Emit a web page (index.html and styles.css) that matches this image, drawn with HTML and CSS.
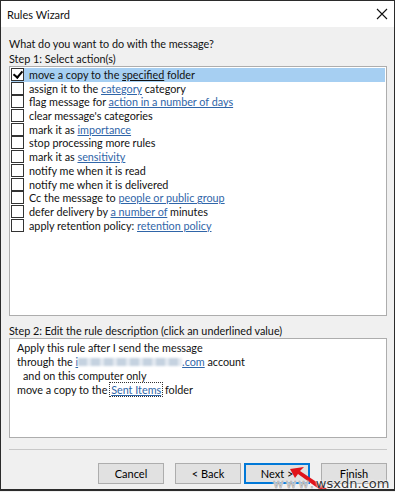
FILE: index.html
```html
<!DOCTYPE html>
<html lang="en">
<head>
  <meta charset="UTF-8" />
  <title>Rules Wizard</title>
  <link rel="stylesheet" href="styles.css">
</head>
<body>
  <div class="window">
    <div class="titlebar">
      <span class="title">Rules Wizard</span>
      <svg class="close" width="12" height="12" viewBox="0 0 12 12">
        <path d="M1 1 L11 11 M11 1 L1 11" stroke="#111" stroke-width="1.1" fill="none" />
      </svg>
    </div>

    <div class="content">
      <p class="question">What do you want to do with the message?</p>
      <p class="step">Step 1: Select action(s)</p>

      <ul class="actions">
        <li class="selected"><span class="check checked"></span>move a copy to the <u>specified</u> folder</li>
        <li><span class="check"></span>assign it to the <a>category</a> category</li>
        <li><span class="check"></span>flag message for <a>action in a number of days</a></li>
        <li><span class="check"></span>clear message's categories</li>
        <li><span class="check"></span>mark it as <a>importance</a></li>
        <li><span class="check"></span>stop processing more rules</li>
        <li><span class="check"></span>mark it as <a>sensitivity</a></li>
        <li><span class="check"></span>notify me when it is read</li>
        <li><span class="check"></span>notify me when it is delivered</li>
        <li><span class="check"></span>Cc the message to <a>people or public group</a></li>
        <li><span class="check"></span>defer delivery by <a>a number of</a> minutes</li>
        <li><span class="check"></span>apply retention policy: <a>retention policy</a></li>
      </ul>

      <p class="step step2">Step 2: Edit the rule description (click an underlined value)</p>

      <div class="description">
        <div>Apply this rule after I send the message</div>
        <div>through the <a>i<span class="blur"></span>.com</a> account</div>
        <div class="indent">and on this computer only</div>
        <div>move a copy to the <a class="focused">Sent Items</a> folder</div>
      </div>

      <hr class="separator">

      <div class="buttons">
        <button>Cancel</button>
        <button>&lt; Back</button>
        <button class="default">Next &gt;</button>
        <button>Finish</button>
      </div>
    </div>

    <!-- watermark over the buttons -->
    <svg class="arrow" width="50" height="30" viewBox="0 0 50 30">
      <polygon points="0,2 14,0 10,4 40,24 46,22 44,30 36,27 8,7 5,11" fill="#e0141b" />
    </svg>
    <div class="watermark"><span class="www">www.</span>wsxdn.com</div>
  </div>
</body>
</html>
```

FILE: styles.css
```css
* {
  box-sizing: border-box;
  margin: 0;
  padding: 0;
}
body {
  background: #f0f0f0;
  font-family: 'Lato', sans-serif;
  font-size: 10.8px;
  color: #111;
}
.window {
  position: relative;
  width: 395px;
  height: 491px;
  border: 1px solid #2b2b2b;
  border-bottom-width: 2px;
  background: #f0f0f0;
  overflow: hidden;
}
.titlebar {
  height: 26px;
  background: #fff;
  display: flex;
  align-items: center;
  justify-content: space-between;
  padding: 0 6px;
}
.title {
  font-size: 11px;
}
.content {
  padding: 9px 7px 0 8px;
}
.question, .step {
  line-height: 15px;
  height: 15px;
}
.actions {
  list-style: none;
  background: #fff;
  border: 1px solid #adadad;
  height: 250px;
  padding: 1px 1px 0 1px;
}
.actions li {
  height: 13.7px;
  line-height: 13.7px;
  white-space: nowrap;
}
.actions li.selected {
  background: #a6cff2;
}
.check {
  display: inline-block;
  vertical-align: -2px;
  width: 13px;
  height: 13px;
  border: 1px solid #333;
  background: #fff;
  margin: 0 5px 0 0;
  position: relative;
}
.checked::after {
  content: "";
  position: absolute;
  left: 3px;
  top: 0;
  width: 4px;
  height: 7px;
  border: solid #000;
  border-width: 0 2px 2px 0;
  transform: rotate(40deg);
}
a {
  color: #2f65a8;
  text-decoration: underline;
}
.step2 {
  margin-top: 7px;
}
.description {
  background: #fff;
  border: 1px solid #adadad;
  height: 100px;
  padding: 2px 7px;
  line-height: 14px;
}
.description .indent {
  padding-left: 6px;
}
.blur {
  display: inline-block;
  width: 104px;
  height: 8px;
  vertical-align: 0;
  background: repeating-linear-gradient(90deg, #c5d2e0 0 9px, #e3e9f0 9px 13px);
  filter: blur(1px);
}
.focused {
  outline: 1px dotted #333;
  padding: 0 1px;
}
.separator {
  border: none;
  border-top: 1px solid #c8c8c8;
  margin-top: 11px;
}
.buttons {
  display: flex;
  justify-content: flex-end;
  gap: 11px;
  margin-top: 13px;
}
button {
  font-family: 'Lato', sans-serif;
  font-size: 11px;
  width: 66px;
  height: 21px;
  background: #e1e1e1;
  border: 1px solid #adadad;
  color: #000;
}
button.default {
  border: 2px solid #0078d7;
  margin-left: -8px;
}
.arrow {
  position: absolute;
  left: 289px;
  top: 466px;
}
.watermark {
  position: absolute;
  left: 272px;
  top: 475px;
  font-family: 'DejaVu Sans', sans-serif;
  font-size: 13px;
  color: #333;
  text-shadow: 0 0 2px #fff, 0 0 2px #fff;
}
.watermark .www {
  color: #f0f0f0;
  -webkit-text-stroke: 0.5px #999;
  letter-spacing: 2px;
}
```
